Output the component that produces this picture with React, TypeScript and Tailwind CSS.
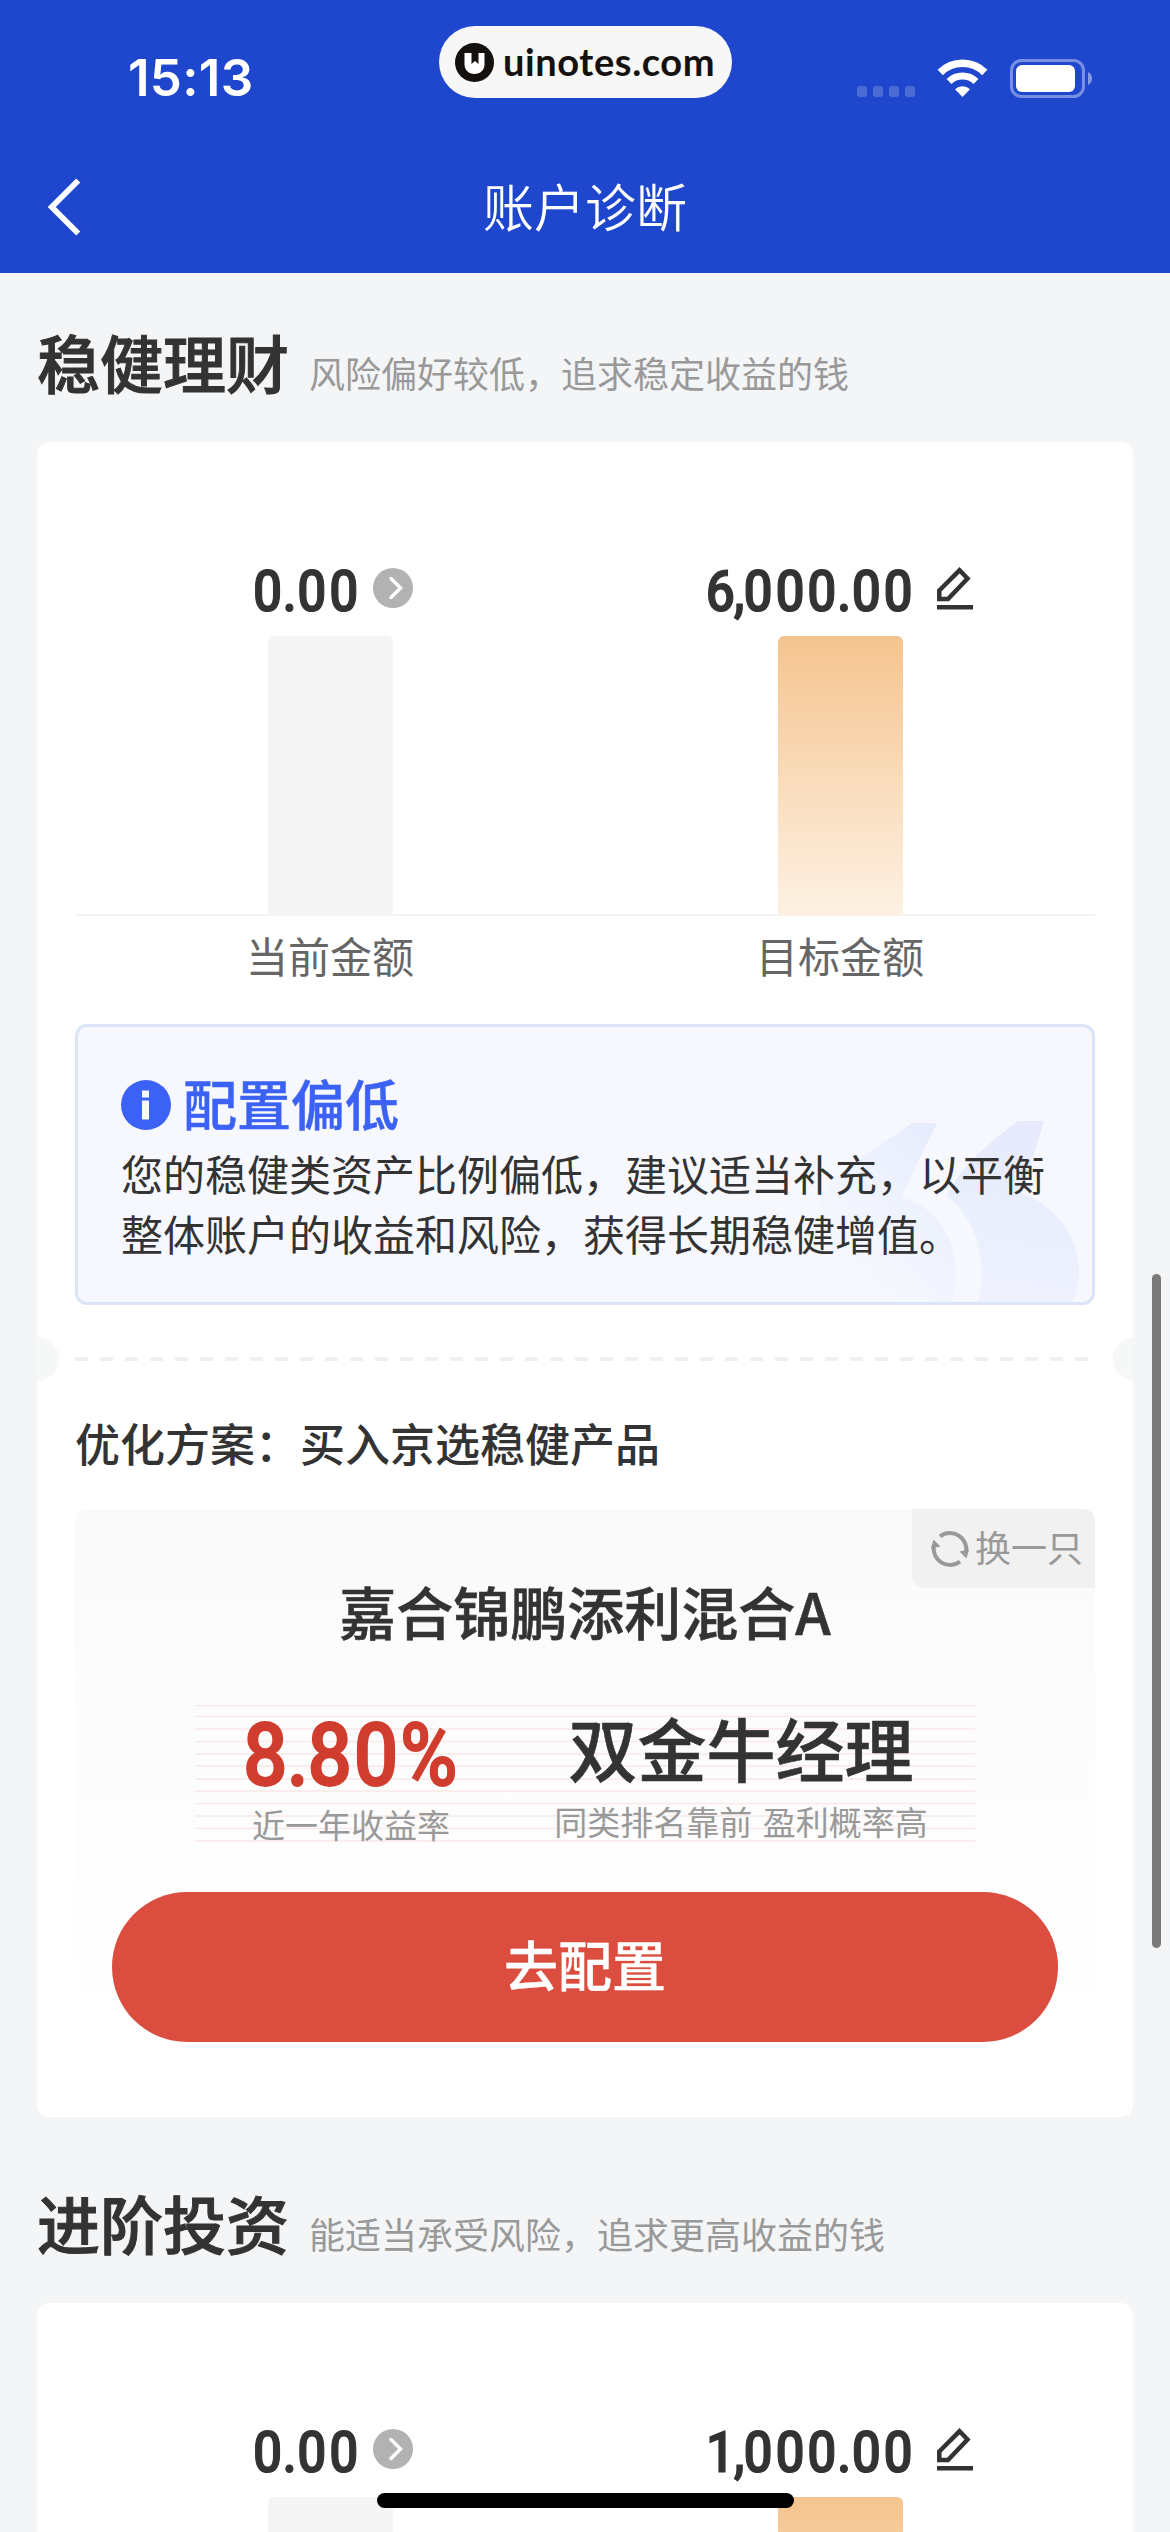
import { ChevronLeft } from 'lucide-react';

interface SectionData {
  title: string;
  subtitle: string;
  current: string;
  target: string;
  expanded: boolean;
}

const sections: SectionData[] = [
  { title: '稳健理财', subtitle: '风险偏好较低，追求稳定收益的钱', current: '0.00', target: '6,000.00', expanded: true },
  { title: '进阶投资', subtitle: '能适当承受风险，追求更高收益的钱', current: '0.00', target: '1,000.00', expanded: false },
];

// y offsets of the thin lines behind the product figures
const stripeOffsets = [0.5, 11.5, 24, 36.5, 49, 61, 74, 86, 98.5, 111, 123.5, 136];

function StatusBar() {
  return (
    <div className="relative flex h-[142px] items-start justify-between pt-[48px] pr-[78px] pl-[128px]">
      <div className="font-['Inter'] text-[51px] leading-[60px] font-semibold tracking-[0.3px]">15:13</div>
      <div className="absolute top-[26px] left-[439px] flex h-[72px] w-[293px] items-center rounded-full bg-[#f7f7f7] pl-4 text-[#15110f]">
        <svg className="h-[39px] w-[39px] shrink-0" viewBox="0 0 39 39">
          <circle cx="19.5" cy="19.5" r="19.5" fill="#15110f" />
          <path d="M9.500 10H16.500v11l3.500-3 3.500 3V10h6v11.500c0 5.500-4.300 9.500-10 9.500s-10-4-10-9.500z" fill="#fff" />
        </svg>
        <span className="ml-[9px] pb-[3px] font-['Lato'] text-[38px] leading-[48px] font-bold tracking-[0.6px]">uinotes.com</span>
      </div>
      <div className="flex h-[60px] items-center">
        <div className="mt-[26px] flex gap-1.5">
          {[0, 1, 2, 3].map(i => (
            <div key={i} className="h-[11px] w-2.5 rounded-[3px] bg-white/20" />
          ))}
        </div>
        <svg className="ml-[22px] h-[38px] w-[51px]" viewBox="0 0 51 38" fill="none" stroke="#fff">
          <path d="M3.300 13.500a31.500 31.500 0 0 1 44.400 0" strokeWidth="7.500" />
          <path d="M12 22.500a19.500 19.500 0 0 1 27 0" strokeWidth="7" />
          <path d="M18 30.300a11 11 0 0 1 15 0L25.500 38z" fill="#fff" stroke="none" />
        </svg>
        <svg className="ml-[22px] h-[39px] w-[82px]" viewBox="0 0 82 39">
          <rect x="1.500" y="1.500" width="72" height="36" rx="10" fill="none" stroke="#fff" strokeOpacity="0.4" strokeWidth="3" />
          <rect x="6" y="6" width="59" height="27" rx="6" fill="#fff" />
          <path d="M78 13c2.700 1.200 4 3.700 4 6.500s-1.300 5.300-4 6.500z" fill="#fff" fillOpacity="0.45" />
        </svg>
      </div>
    </div>
  );
}

function Header() {
  return (
    <header className="h-[273px] bg-[#1f47cd] text-white">
      <StatusBar />
      <div className="relative flex h-[131px] items-center justify-center pb-1.5">
        <ChevronLeft className="absolute top-[12px] left-[12px] h-[106px] w-[106px]" strokeWidth={1.3} strokeLinecap="butt" strokeLinejoin="miter" />
        <h1 className="text-[51px] leading-[60px] font-[350]">账户诊断</h1>
      </div>
    </header>
  );
}

function PencilIcon() {
  return (
    <svg className="h-[43px] w-[36px]" viewBox="0 0 36 43" fill="none" stroke="#333" strokeWidth="4.500">
      <path d="M2.300 23.500 22.500 3.300 30.500 11.500 11 32H2.300z" />
      <path d="M0 40.300h36" />
    </svg>
  );
}

function ArrowBadge() {
  return (
    <svg className="h-10 w-10" viewBox="0 0 40 40" fill="none">
      <circle cx="20" cy="20" r="20" fill="#b2b2b2" />
      <path d="m18 10.500 9.500 9.500-9.500 9.500" stroke="#fff" strokeWidth="3.500" strokeLinecap="round" />
    </svg>
  );
}

// Condensed figures, with separators tighter than the digits around them
function Amount({ value }: { value: string }) {
  return (
    <span className="-mx-2 scale-x-90 pt-[7px] font-['Roboto'] text-[57px] leading-[60px] font-medium tracking-[3px] text-[#333] [-webkit-text-stroke:1.2px]">
      {value.split(/([.,])/).map((part, i) => (
        <span key={i} className={part === ',' ? '-mx-[4.5px]' : part === '.' ? '-mx-[2.5px]' : ''}>{part}</span>
      ))}
    </span>
  );
}

function AmountChart({ current, target, showLabels }: { current: string; target: string; showLabels: boolean }) {
  return (
    <div className="px-[38px] pt-[98px]">
      <div className="grid h-[376px] grid-cols-2 border-b-2 border-[#f3f4f5]">
        <div className="flex flex-col items-center">
          <div className="flex h-24 items-center gap-3.5 pl-2">
            <Amount value={current} />
            <ArrowBadge />
          </div>
          <div className="h-[280px] w-[125px] rounded-t-md bg-[#f5f5f5]" />
        </div>
        <div className="flex flex-col items-center">
          <div className="flex h-24 items-center gap-[18px] pr-1.5">
            <Amount value={target} />
            <PencilIcon />
          </div>
          <div className="h-[280px] w-[125px] rounded-t-md bg-linear-to-b from-[#f5c48e] to-[#fdf1e3]" />
        </div>
      </div>
      {showLabels && (
        <div className="grid h-[82px] grid-cols-2 items-center pb-1 text-center text-[42px] leading-[60px] text-[#666]">
          <span>当前金额</span>
          <span>目标金额</span>
        </div>
      )}
    </div>
  );
}

function AdviceBox() {
  return (
    <div className="relative mx-[38px] mt-[26px] h-[281px] overflow-hidden rounded-xl border-[3px] border-[#dce4f8] bg-[#f6f8fe] pt-[46px] pl-[43px]">
      {/* Quote mark watermark */}
      <svg className="absolute right-0 bottom-0 h-[190px] w-[290px]" viewBox="802 1112 290 190">
        <defs>
          <linearGradient id="quoteLeft" x1="0.8" y1="0" x2="0.2" y2="0.8">
            <stop offset="0" stopColor="#e6ecfd" />
            <stop offset="0.5" stopColor="#eff3fe" />
            <stop offset="1" stopColor="#f6f8fe" />
          </linearGradient>
          <linearGradient id="quoteRight" x1="0.6" y1="0" x2="0.5" y2="1">
            <stop offset="0" stopColor="#e6e9fb" />
            <stop offset="0.55" stopColor="#e9effd" />
            <stop offset="1" stopColor="#eff1fe" />
          </linearGradient>
        </defs>
        <path d="M912 1123H937L901 1197C935 1206 956 1238 956 1272Q956 1288 952 1302H884C840 1272 806 1232 820 1198C842 1164 875 1150 912 1123Z" fill="url(#quoteLeft)" />
        <path d="M1018 1121H1044L1022 1193C1056 1206 1079 1238 1079 1272Q1079 1288 1073 1302H978Q982 1288 981 1262C978 1232 966 1212 947 1196C962 1164 990 1142 1018 1121Z" fill="url(#quoteRight)" />
      </svg>
      <div className="relative">
        <div className="flex items-center gap-3 text-[#3c62f5]">
          <svg className="mt-1 h-[50px] w-[50px]" viewBox="0 0 50 50">
            <circle cx="25" cy="25" r="25" fill="currentColor" />
            <path d="M21 10.500h7v7h-7zM21 20.500h7v19h-7z" fill="#f6f8fe" />
          </svg>
          <h3 className="text-[54px] leading-[60px] font-medium [-webkit-text-stroke:0.5px]">配置偏低</h3>
        </div>
        <p className="mt-[10px] text-[42px] leading-[60px] text-[#333]">
          您的稳健类资产比例偏低，建议适当补充，以平衡
          <br />
          整体账户的收益和风险，获得长期稳健增值。
        </p>
      </div>
    </div>
  );
}

function TicketDivider() {
  return (
    <div className="mt-[32px] -mr-[24px] -ml-[22px] flex h-11 items-center">
      <div className="h-11 w-11 shrink-0 rounded-full bg-[#f6f7f7]" />
      <div className="mx-4 h-1 flex-1 bg-[repeating-linear-gradient(to_right,#f0f0f0_0_13px,transparent_13px_25px)]" />
      <div className="h-11 w-11 shrink-0 rounded-full bg-[#f6f7f7]" />
    </div>
  );
}

function ProductCard() {
  return (
    <div className="relative mx-[38px] mt-[36px] flex h-[533px] flex-col items-center rounded-xl bg-linear-to-b from-[#fafafa] to-white pt-[71px]">
      <button className="absolute top-0 right-0 flex h-[79px] w-[183px] items-center rounded-tr-xl rounded-bl-xl bg-[#f1f1f1] pl-[19px] text-[36px] leading-[50px] text-[#999]">
        <svg className="mr-[6px] h-[38px] w-[38px]" viewBox="0 0 38 38" fill="none" stroke="#999" strokeWidth="4">
          <path d="M9 6.300A16.500 16.500 0 0 1 35 23" />
          <path d="M29 31.700A16.500 16.500 0 0 1 3 15" />
          <path d="M38 19.500 35.500 28.500 28.500 21.500z" fill="#999" stroke="none" />
          <path d="M0 18.500 2.500 9.500 9.500 16.500z" fill="#999" stroke="none" />
        </svg>
        <span className="pb-1.5">换一只</span>
      </button>
      <h3 className="text-[57px] leading-[60px] font-medium text-[#333] [-webkit-text-stroke:0.6px]">嘉合锦鹏添利混合A</h3>
      <div className="relative mt-[65px] flex h-[137px] w-[780px]">
        <svg className="absolute inset-0 h-[137px] w-[780px]" viewBox="0 0 780 137" stroke="#f9e9e7" strokeWidth="1.500">
          {stripeOffsets.map(y => (
            <path key={y} d={`M0 ${y}h780`} />
          ))}
        </svg>
        <div className="relative flex w-[312px] flex-col items-center">
          <span className="mt-[10px] scale-x-90 font-['Roboto'] text-[87px] leading-[80px] font-medium tracking-[2px] text-[#d03d2f] [-webkit-text-stroke:1.8px]">
            8<span className="-mx-[3px]">.</span>80%
          </span>
          <span className="mt-[5px] text-[33px] leading-[48px] text-[#999]">近一年收益率</span>
        </div>
        <div className="relative flex w-[468px] flex-col items-center">
          <span className="mt-[2px] text-[69px] leading-[80px] font-medium text-[#333] [-webkit-text-stroke:0.6px]">双金牛经理</span>
          <span className="mt-[10px] text-[33px] leading-[48px] [word-spacing:3px] text-[#999]">同类排名靠前 盈利概率高</span>
        </div>
      </div>
      <button className="mt-[50px] h-[150px] w-[946px] rounded-full bg-[#db4e3f] pb-1.5 text-[54px] leading-[60px] font-medium text-white [-webkit-text-stroke:0.4px]">去配置</button>
    </div>
  );
}

export default function App() {
  return (
    <div className="relative h-[2532px] w-[1170px] overflow-hidden bg-[#f3f5f7] font-['Noto_Sans_CJK_SC',sans-serif]">
      <Header />
      {sections.map(section => (
        <section key={section.title} className="px-[37px] pb-[17px]">
          <div className="flex h-[169px] items-baseline gap-5 pt-[46px]">
            <h2 className="text-[63px] leading-[84px] font-medium text-[#333] [-webkit-text-stroke:1px]">{section.title}</h2>
            <p className="text-[36px] text-[#999]">{section.subtitle}</p>
          </div>
          <div className="overflow-hidden rounded-xl bg-white pb-[75px]">
            <AmountChart current={section.current} target={section.target} showLabels={section.expanded} />
            {section.expanded && (
              <>
                <AdviceBox />
                <TicketDivider />
                <h3 className="mt-[32px] ml-[38px] text-[45px] leading-[60px] font-medium text-[#333]">优化方案：买入京选稳健产品</h3>
                <ProductCard />
              </>
            )}
          </div>
        </section>
      ))}

      {/* Scroll thumb and home indicator */}
      <div className="absolute top-[1274px] right-[9px] h-[674px] w-[9px] rounded-full bg-[#7a7a7a]" />
      <div className="absolute top-[2493px] left-[377px] h-[15px] w-[417px] rounded-full bg-black" />
    </div>
  );
}
